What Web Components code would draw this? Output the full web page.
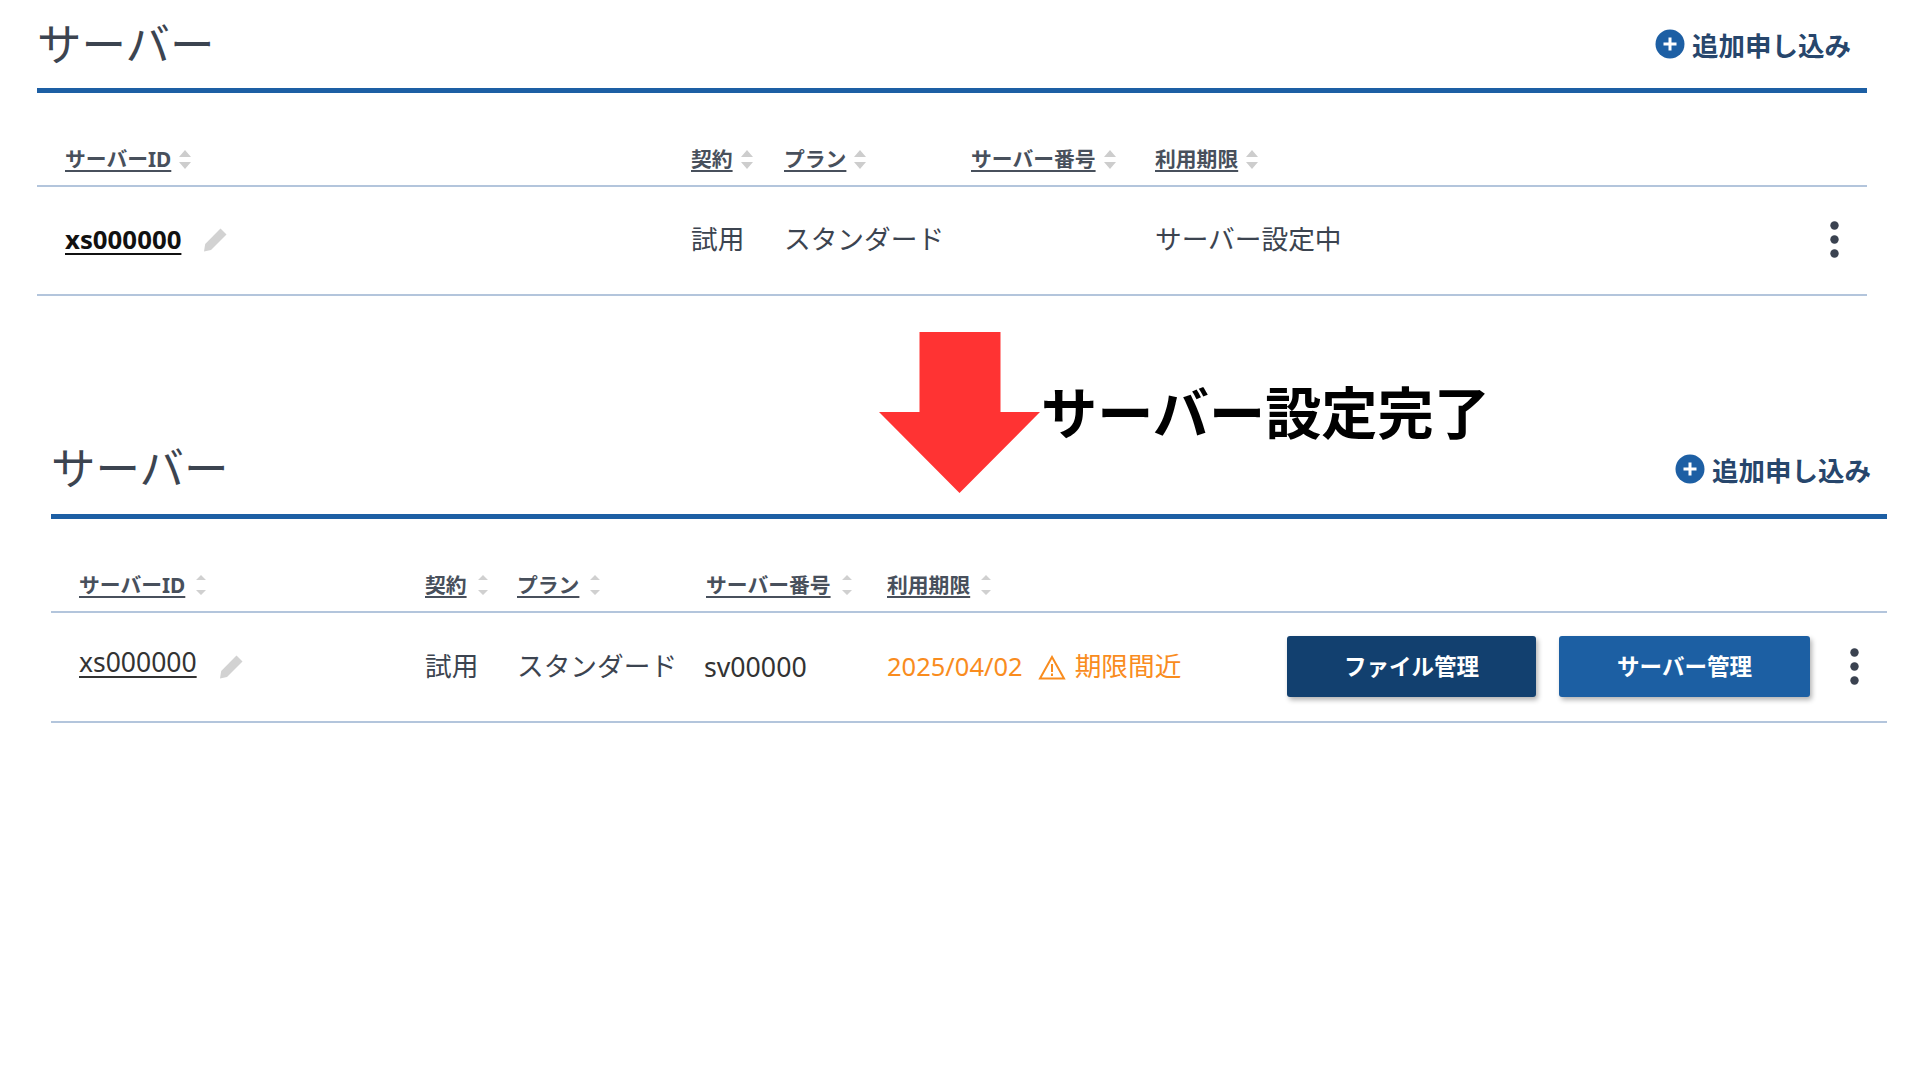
<!DOCTYPE html>
<html lang="ja">
<head>
<meta charset="utf-8">
<title>サーバー</title>
<style>
    html, body { margin: 0; background: #fff; }
    body {
        width: 1920px;
        height: 1080px;
        overflow: hidden;
        position: relative;
        font-family: "Noto Sans", "Noto Sans CJK JP", sans-serif;
        color: #3c4450;
    }
    .first { --panel-left: 37px; --panel-width: 1830px; --cols: 626px 93px 187px 184px 1fr auto; }
    .second { --panel-left: 51px; --panel-width: 1836px; --panel-top: 130px; --row-height: 106px; --lift: 3px; --cols: 346px 92px 189px 181px 1fr auto; }
</style>
</head>
<body>

<server-panel class="first">
    <table-row head>
        <sort-head>サーバーID</sort-head>
        <sort-head>契約</sort-head>
        <sort-head>プラン</sort-head>
        <sort-head>サーバー番号</sort-head>
        <sort-head>利用期限</sort-head>
    </table-row>
    <table-row>
        <server-id strong>xs000000</server-id>
        <span>試用</span>
        <span>スタンダード</span>
        <span></span>
        <span>サーバー設定中</span>
        <kebab-menu slot="end"></kebab-menu>
    </table-row>
</server-panel>

<server-panel class="second">
    <table-row head>
        <sort-head thin>サーバーID</sort-head>
        <sort-head thin>契約</sort-head>
        <sort-head thin>プラン</sort-head>
        <sort-head thin>サーバー番号</sort-head>
        <sort-head thin>利用期限</sort-head>
    </table-row>
    <table-row>
        <server-id>xs000000</server-id>
        <span>試用</span>
        <span>スタンダード</span>
        <span style="margin-left:-2px;margin-top:3px;color:#333">sv00000</span>
        <expiry-note date="2025/04/02">期限間近</expiry-note>
        <action-button slot="end" dark>ファイル管理</action-button>
        <action-button slot="end">サーバー管理</action-button>
        <kebab-menu slot="end" wide></kebab-menu>
    </table-row>
</server-panel>

<down-callout>サーバー設定完了</down-callout>

<script>
// Panel with the title bar and the thick blue rule
class ServerPanel extends HTMLElement {
    constructor() {
        super();
        this.attachShadow({ mode: 'open' });
        this.shadowRoot.innerHTML = `
            <style>
                :host {
                    display: block;
                    width: var(--panel-width);
                    margin-left: var(--panel-left);
                    margin-top: var(--panel-top, 0);
                }
                .bar {
                    height: 88px;
                    display: flex;
                    align-items: center;
                    justify-content: space-between;
                    border-bottom: 5px solid #1d5fa4;
                    padding-right: 16px;
                }
                h2 {
                    margin: 0 0 var(--lift, 0);
                    font-size: 44.5px;
                    font-weight: 400;
                    line-height: 1;
                    color: #3c4450;
                }
                .add {
                    display: flex;
                    align-items: center;
                    gap: 7px;
                    margin-bottom: calc(var(--lift, 0px) / 2);
                    font-size: 26.5px;
                    font-weight: 700;
                    color: #27466c;
                }
                svg { display: block; }
            </style>
            <div class="bar">
                <h2>サーバー</h2>
                <div class="add">
                    <svg width="30" height="30" viewBox="0 0 30 30">
                        <circle cx="15" cy="15" r="14.5" fill="#1d5fa4"/>
                        <path d="M15 8.5v13M8.5 15h13" stroke="#fff" stroke-width="3"/>
                    </svg>
                    <span>追加申し込み</span>
                </div>
            </div>
            <slot></slot>
        `;
    }
}

// One table row, cells go in a shared grid
class TableRow extends HTMLElement {
    constructor() {
        super();
        this.attachShadow({ mode: 'open' });
        this.shadowRoot.innerHTML = `
            <style>
                :host {
                    display: grid;
                    grid-template-columns: var(--cols);
                    align-items: center;
                    padding-left: 28px;
                    padding-bottom: 2px;
                    height: var(--row-height, 105px);
                    font-size: 26.7px;
                    line-height: 1.2;
                    color: #3c4450;
                    border-bottom: 2px solid #b3c5dc;
                }
                :host([head]) {
                    height: 92px;
                    padding-bottom: 0;
                    align-items: end;
                }
                .end {
                    display: flex;
                    align-items: center;
                    justify-content: flex-end;
                }
            </style>
            <slot></slot>
            <div class="end"><slot name="end"></slot></div>
        `;
    }
}

// Underlined column title with the two sort triangles
class SortHead extends HTMLElement {
    constructor() {
        super();
        this.attachShadow({ mode: 'open' });
        const thin = this.hasAttribute('thin');
        this.shadowRoot.innerHTML = `
            <style>
                :host {
                    display: flex;
                    align-items: center;
                    gap: ${thin ? 10 : 7}px;
                    height: 48px;
                    margin-bottom: 2px;
                    font-size: 20.8px;
                    font-weight: 700;
                    color: #48505c;
                }
                span { text-decoration: underline; text-underline-offset: 3px; }
                svg { display: block; fill: ${thin ? '#d0d0d0' : '#cdcdcd'}; }
            </style>
            <span><slot></slot></span>
            <svg width="${thin ? 12 : 14}" height="24" viewBox="0 0 ${thin ? 12 : 14} 24"><path d="${thin ? 'M6 2l5 5H1zM6 22l-5-5h10z' : 'M7 3l6 7H1zM7 22l-6-7h12z'}"/></svg>
        `;
    }
}

// Server id link and the grey pencil
class ServerId extends HTMLElement {
    constructor() {
        super();
        this.attachShadow({ mode: 'open' });
        const strong = this.hasAttribute('strong');
        this.shadowRoot.innerHTML = `
            <style>
                :host { display: flex; align-items: center; gap: 22px; font-size: ${strong ? '25.8px' : '26.5px'}; }
                a {
                    color: ${strong ? '#111' : '#333'};
                    font-weight: ${strong ? 700 : 400};
                    text-decoration: underline;
                    text-underline-offset: 4px;
                    margin-top: ${strong ? 0 : -6}px;
                }
                svg { display: block; margin-top: 1px; }
            </style>
            <a><slot></slot></a>
            <svg width="25" height="25" viewBox="0 0 25 25">
                <path fill="#d2d2d2" d="M17.5 1.5l6 6L8 23 1 24.5 2.2 17z"/>
            </svg>
        `;
    }
}

class KebabMenu extends HTMLElement {
    constructor() {
        super();
        this.attachShadow({ mode: 'open' });
        this.shadowRoot.innerHTML = `
            <style>
                :host { display: block; margin-left: ${this.hasAttribute('wide') ? '40px' : '0'}; margin-right: 28px; }
                svg { display: block; }
            </style>
            <svg width="9" height="37" viewBox="0 0 9 37" fill="#3a4250">
                <circle cx="4.5" cy="4.5" r="4.2"/>
                <circle cx="4.5" cy="18.5" r="4.2"/>
                <circle cx="4.5" cy="32.5" r="4.2"/>
            </svg>
        `;
    }
}

class ActionButton extends HTMLElement {
    constructor() {
        super();
        this.attachShadow({ mode: 'open' });
        const dark = this.hasAttribute('dark');
        this.shadowRoot.innerHTML = `
            <style>
                :host {
                    display: flex;
                    flex: none;
                    align-items: center;
                    justify-content: center;
                    width: ${dark ? 249 : 251}px;
                    height: 61px;
                    margin-left: 23px;
                    border-radius: 3px;
                    background: ${dark ? '#12406f' : '#1c5fa3'};
                    box-shadow: 2px 3px 5px rgba(0, 0, 0, .3);
                    color: #fff;
                    font-size: 22.5px;
                    font-weight: 700;
                    white-space: nowrap;
                }
            </style>
            <slot></slot>
        `;
    }
}

// Orange date with the warning label
class ExpiryNote extends HTMLElement {
    constructor() {
        super();
        this.attachShadow({ mode: 'open' });
        this.shadowRoot.innerHTML = `
            <style>
                :host { display: flex; align-items: center; color: #f98c1e; white-space: nowrap; }
                span { font-size: 25.5px; }
                svg { display: block; margin: 2px 9px 0 15px; }
            </style>
            <span>${this.getAttribute('date')}</span>
            <svg width="28" height="25" viewBox="0 0 28 25" fill="none" stroke="#f98c1e" stroke-width="2">
                <path d="M14 2L2 23.5h24z"/>
                <path d="M14 9v8M14 18.5v2.5"/>
            </svg>
            <slot></slot>
        `;
    }
}

// Big red arrow with its caption, laid over the two panels
class DownCallout extends HTMLElement {
    constructor() {
        super();
        this.attachShadow({ mode: 'open' });
        this.shadowRoot.innerHTML = `
            <style>
                :host {
                    position: absolute;
                    left: 879px;
                    top: 332px;
                    display: flex;
                    align-items: flex-start;
                }
                svg { display: block; }
                span {
                    margin: 46px 0 0 1px;
                    font-size: 56.2px;
                    line-height: 64px;
                    font-weight: 700;
                    color: #000;
                    font-family: "Noto Sans CJK JP", sans-serif;
                    white-space: nowrap;
                }
            </style>
            <svg width="161" height="161" viewBox="0 0 161 161">
                <path fill="#ff3333" d="M40.5 0h81v80H161L80.5 161 0 80h40.5z"/>
            </svg>
            <span><slot></slot></span>
        `;
    }
}

customElements.define('server-panel', ServerPanel);
customElements.define('table-row', TableRow);
customElements.define('sort-head', SortHead);
customElements.define('server-id', ServerId);
customElements.define('kebab-menu', KebabMenu);
customElements.define('action-button', ActionButton);
customElements.define('expiry-note', ExpiryNote);
customElements.define('down-callout', DownCallout);
</script>
</body>
</html>
